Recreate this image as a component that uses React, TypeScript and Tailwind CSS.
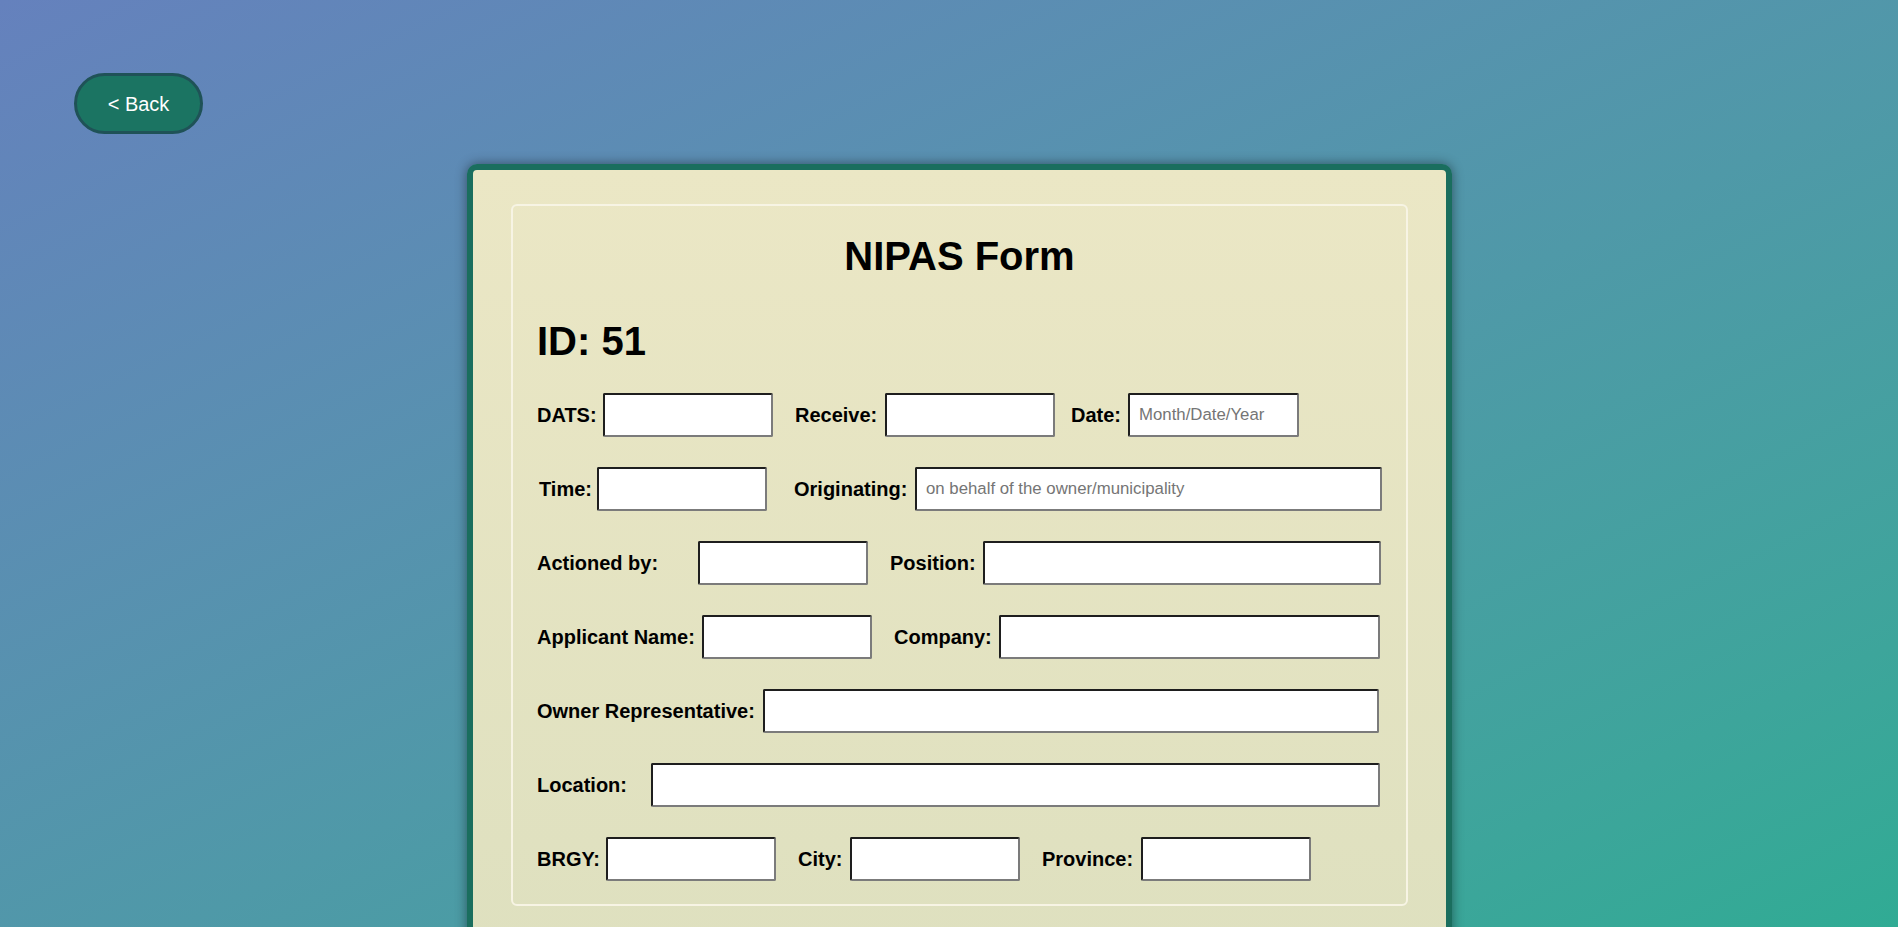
import React from 'react';

const inputCls =
  'h-[44px] bg-white rounded-[2px] border-2 border-solid border-t-[#1e1e1e] border-l-[#1e1e1e] border-r-[#7b7b7b] border-b-[#7b7b7b] px-[9px] text-[16.8px] text-black placeholder:text-[#757575] outline-none';

const labelCls = 'shrink-0 font-bold text-[20px] text-black leading-none';

function Field({
  label,
  labelW,
  inputW,
  gap = 0,
  indent = 0,
  placeholder,
}: {
  label: string;
  labelW: number;
  inputW: number;
  gap?: number;
  indent?: number;
  placeholder?: string;
}) {
  return (
    <div className="flex items-center" style={{ marginLeft: gap }}>
      <label className={labelCls} style={{ width: labelW, paddingLeft: indent }}>
        {label}
      </label>
      <input type="text" placeholder={placeholder} className={inputCls} style={{ width: inputW }} />
    </div>
  );
}

export default function App() {
  return (
    <div className="h-screen overflow-hidden bg-linear-to-br from-[#6581bd] to-[#30ab94] font-['Liberation_Sans',Arial,sans-serif]">
      <div className="pt-[73px] pl-[74px]">
        <button className="w-[129px] h-[61px] rounded-full bg-[#1b7462] border-[3px] border-[#1f5257] text-white text-[20px]">
          &lt; Back
        </button>
      </div>

      <div className="flex justify-center pl-[21px] mt-[30px]">
        <div className="w-[985px] rounded-[10px] border-[6px] border-[#1a6e5e] bg-linear-to-b from-[#ebe7c5] to-[#dee0bf] pt-[34px] px-[38px] pb-[60px] shadow-[0_0_12px_rgba(0,0,0,0.45)]">
          <div className="rounded-md border-2 border-[#f7f4e4] pt-[27px] pb-[23px] pl-[24px]">
            <h1 className="text-center font-bold text-[40px] leading-[1.15] text-black pr-[24px]">NIPAS Form</h1>
            <h2 className="mt-[39px] font-bold text-[40px] leading-[1.15] text-black">ID: 51</h2>

            <div className="mt-[29px] flex flex-col gap-[30px]">
              <div className="flex items-center">
                <Field label="DATS:" labelW={66} inputW={170} />
                <Field label="Receive:" labelW={90} inputW={170} gap={22} />
                <Field label="Date:" labelW={57} inputW={171} gap={16} placeholder="Month/Date/Year" />
              </div>

              <div className="flex items-center">
                <Field label="Time:" labelW={60} indent={2} inputW={170} />
                <Field
                  label="Originating:"
                  labelW={121}
                  inputW={467}
                  gap={27}
                  placeholder="on behalf of the owner/municipality"
                />
              </div>

              <div className="flex items-center">
                <Field label="Actioned by:" labelW={161} inputW={170} />
                <Field label="Position:" labelW={93} inputW={398} gap={22} />
              </div>

              <div className="flex items-center">
                <Field label="Applicant Name:" labelW={165} inputW={170} />
                <Field label="Company:" labelW={105} inputW={381} gap={22} />
              </div>

              <div className="flex items-center">
                <Field label="Owner Representative:" labelW={226} inputW={616} />
              </div>

              <div className="flex items-center">
                <Field label="Location:" labelW={114} inputW={729} />
              </div>

              <div className="flex items-center">
                <Field label="BRGY:" labelW={69} inputW={170} />
                <Field label="City:" labelW={52} inputW={170} gap={22} />
                <Field label="Province:" labelW={99} inputW={170} gap={22} />
              </div>
            </div>
          </div>
        </div>
      </div>
    </div>
  );
}
